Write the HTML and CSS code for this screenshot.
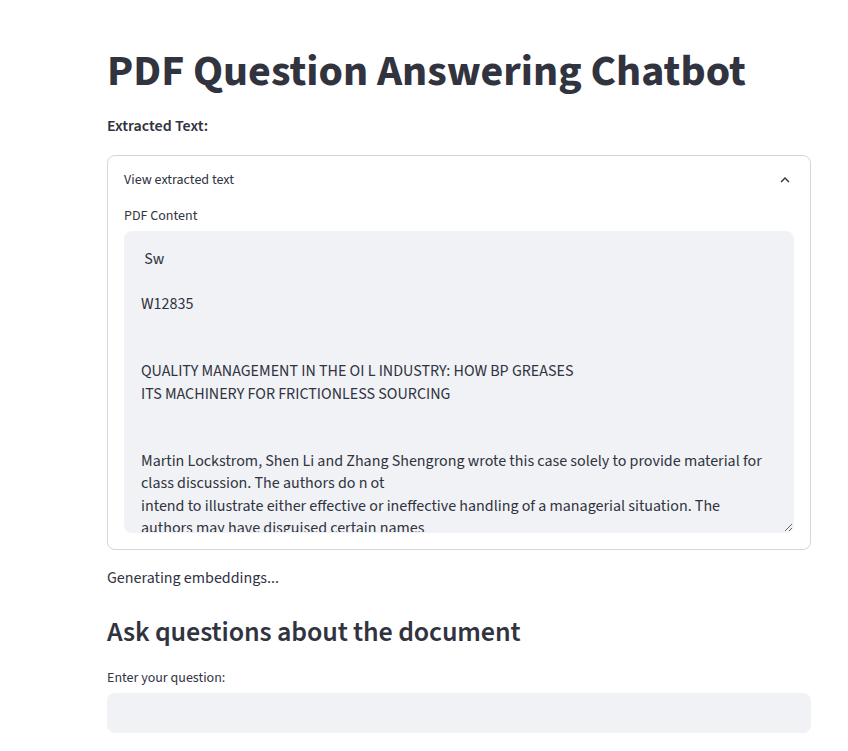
FILE: index.html
```html
<!DOCTYPE html>
<html lang="en">
<head>
<meta charset="utf-8">
<title>PDF Question Answering Chatbot</title>
<link rel="stylesheet" href="styles.css">
</head>
<body>
<main class="main">
  <h1 class="title">PDF Question Answering Chatbot</h1>
  <p class="strong-text">Extracted Text:</p>
  <details class="expander" open>
    <summary class="expander-summary">
      <span>View extracted text</span>
      <svg class="chevron" viewBox="0 0 24 24" width="18" height="18" aria-hidden="true"><path d="M12 8l-6 6 1.41 1.41L12 10.83l4.59 4.58L18 14z" fill="#31333f"/></svg>
    </summary>
    <div class="expander-body">
      <label class="field-label" for="pdf">PDF Content</label>
      <textarea id="pdf" class="textarea" readonly> Sw

W12835


QUALITY MANAGEMENT IN THE OI L INDUSTRY: HOW BP GREASES
ITS MACHINERY FOR FRICTIONLESS SOURCING


Martin Lockstrom, Shen Li and Zhang Shengrong wrote this case solely to provide material for class discussion. The authors do n ot
intend to illustrate either effective or ineffective handling of a managerial situation. The
authors may have disguised certain names
and other identifying information to protect confidentiality.

This publication may not be transmitted, photocopied, digitized or otherwise reproduced in any form or by any means without the
permission of the copyright holder.</textarea>
    </div>
  </details>
  <p class="status">Generating embeddings...</p>
  <h3 class="subtitle">Ask questions about the document</h3>
  <label class="field-label field-label-question" for="q">Enter your question:</label>
  <input id="q" class="text-input" type="text">
</main>
</body>
</html>
```
FILE: styles.css
```css
html, body {
  margin: 0;
  padding: 0;
  background: #ffffff;
}
body {
  font-family: "Source Sans 3", "Source Sans Pro", "Liberation Sans", sans-serif;
  color: #31333f;
}
.main {
  width: 704px;
  margin-left: 107px;
  padding-top: 46px;
  display: flex;
  flex-direction: column;
}
.title {
  margin: 0;
  font-size: 44px;
  font-weight: 700;
  line-height: 52.8px;
  padding-bottom: 15px;
}
.strong-text {
  margin: 0 0 16px;
  font-size: 16px;
  font-weight: 600;
  line-height: 25.6px;
}
.expander {
  border: 1px solid rgba(49, 51, 63, 0.2);
  border-radius: 8px;
}
.expander-summary {
  list-style: none;
  display: flex;
  align-items: center;
  justify-content: space-between;
  padding: 13px 16px 0;
  font-size: 14px;
  line-height: 22px;
  cursor: pointer;
}
.expander-summary::-webkit-details-marker { display: none; }
.chevron {
  display: block;
}
.expander-body {
  padding: 14px 16px 16px;
  display: flex;
  flex-direction: column;
}
.field-label {
  display: block;
  font-size: 14px;
  line-height: 22px;
  margin-bottom: 4px;
}
.textarea {
  box-sizing: border-box;
  height: 302px;
  width: 100%;
  margin: 0;
  padding: 16px;
  border: 1px solid transparent;
  border-radius: 8px;
  background: #f0f2f6;
  color: #31333f;
  font-family: inherit;
  font-size: 16px;
  line-height: 22.4px;
  resize: vertical;
  scrollbar-width: none;
  outline: none;
}
.textarea::-webkit-scrollbar { display: none; }
.status {
  margin: 16px 0 0;
  font-size: 16px;
  line-height: 25.6px;
}
.subtitle {
  margin: 24px 0 0;
  font-size: 28px;
  font-weight: 600;
  line-height: 33.6px;
  letter-spacing: -0.12px;
}
.field-label-question {
  margin-top: 17px;
  margin-bottom: 4px;
}
.text-input {
  box-sizing: border-box;
  width: 100%;
  height: 40px;
  margin: 0;
  padding: 0 12px;
  border: 1px solid transparent;
  border-radius: 8px;
  background: #f0f2f6;
  font-family: inherit;
  font-size: 16px;
  color: #31333f;
  outline: none;
}
```
